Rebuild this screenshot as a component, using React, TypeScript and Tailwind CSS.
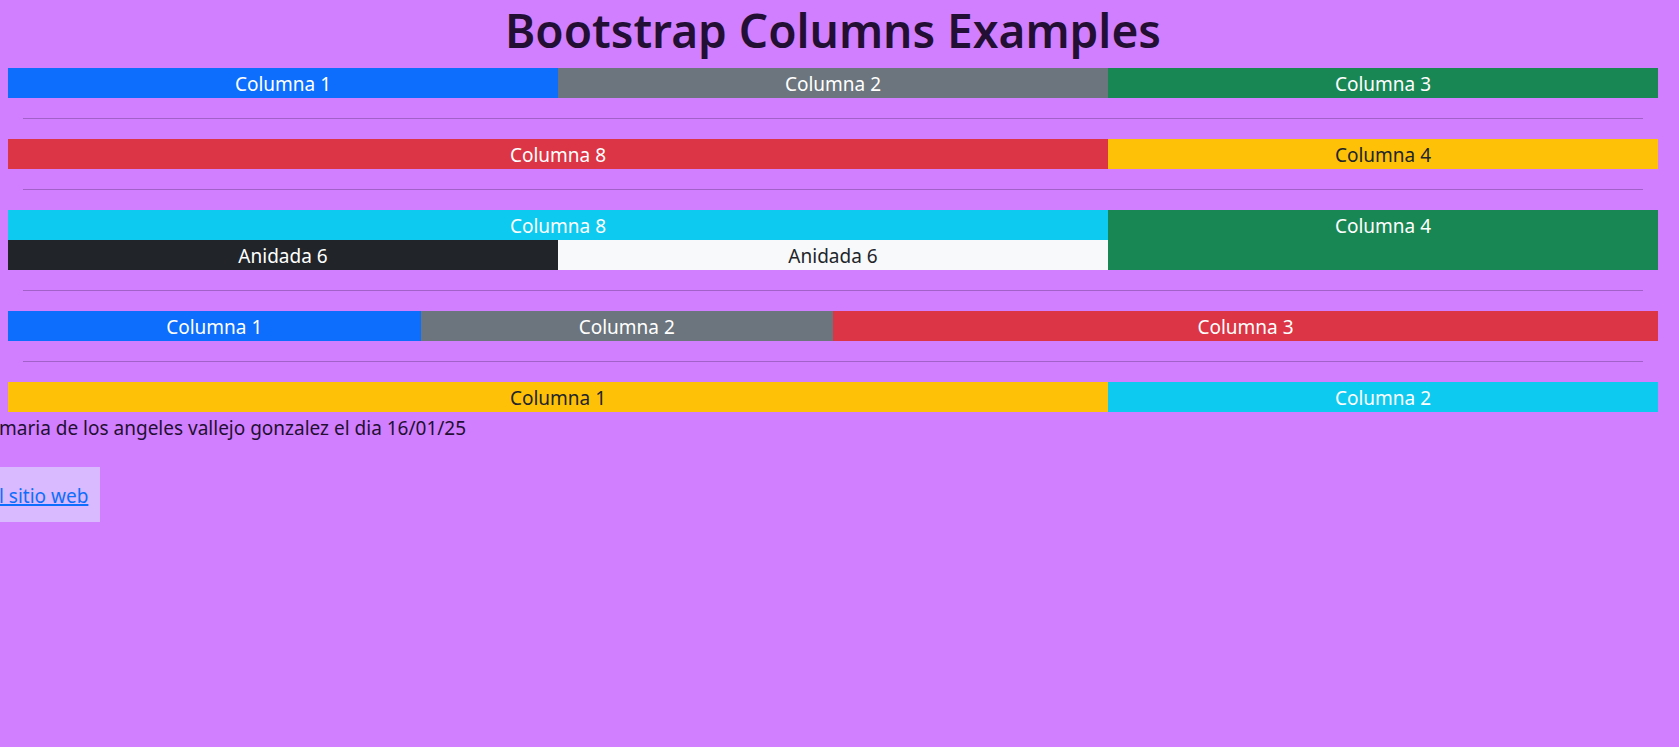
import type { ReactNode } from 'react';

const tones = {
  primary: 'bg-[#0d6efd] text-white',
  secondary: 'bg-[#6c757d] text-white',
  success: 'bg-[#198754] text-white',
  danger: 'bg-[#dc3545] text-white',
  warning: 'bg-[#ffc107] text-[#212529]',
  info: 'bg-[#0dcaf0] text-white',
  dark: 'bg-[#212529] text-white',
  light: 'bg-[#f8f9fa] text-[#212529]',
};

const spans = {
  3: 'col-span-3',
  4: 'col-span-4',
  6: 'col-span-6',
  8: 'col-span-8',
};

function Row({ children }: { children: ReactNode }) {
  return <div className="grid grid-cols-12 text-center">{children}</div>;
}

function Col({ span, tone, children }: { span: keyof typeof spans; tone: keyof typeof tones; children: ReactNode }) {
  return <div className={`${spans[span]} ${tones[tone]} pt-0.5`}>{children}</div>;
}

function Divider() {
  return <hr className="mx-[15px] my-5 h-px border-0 bg-[#a260c9]" />;
}

export default function App() {
  return (
    <div className="min-h-screen bg-[#d27fff] font-['Noto_Sans','Open_Sans',sans-serif] text-[19px] leading-7 text-[#220f33]">
      <main className="ml-2 mr-[21px]">
        <h1 className="mb-2 text-center text-[46px] font-semibold leading-[60px]">Bootstrap Columns Examples</h1>
        <Row>
          <Col span={4} tone="primary">Columna 1</Col>
          <Col span={4} tone="secondary">Columna 2</Col>
          <Col span={4} tone="success">Columna 3</Col>
        </Row>
        <Divider />
        <Row>
          <Col span={8} tone="danger">Columna 8</Col>
          <Col span={4} tone="warning">Columna 4</Col>
        </Row>
        <Divider />
        <Row>
          <Col span={8} tone="info">
            Columna 8
            <Row>
              <Col span={6} tone="dark">Anidada 6</Col>
              <Col span={6} tone="light">Anidada 6</Col>
            </Row>
          </Col>
          <Col span={4} tone="success">Columna 4</Col>
        </Row>
        <Divider />
        <Row>
          <Col span={3} tone="primary">Columna 1</Col>
          <Col span={3} tone="secondary">Columna 2</Col>
          <Col span={6} tone="danger">Columna 3</Col>
        </Row>
        <Divider />
        <Row>
          <Col span={8} tone="warning">Columna 1</Col>
          <Col span={4} tone="info">Columna 2</Col>
        </Row>
      </main>
      <footer className="-ml-px">
        <p className="mb-[25px] pt-0.5">maria de los angeles vallejo gonzalez el dia 16/01/25</p>
        <div className="w-fit bg-[#d9b9ff] pt-[15px] pr-3 pb-3">
          <a href="#" className="text-[#0d6efd] underline decoration-2 underline-offset-1">l sitio web</a>
        </div>
      </footer>
    </div>
  );
}
